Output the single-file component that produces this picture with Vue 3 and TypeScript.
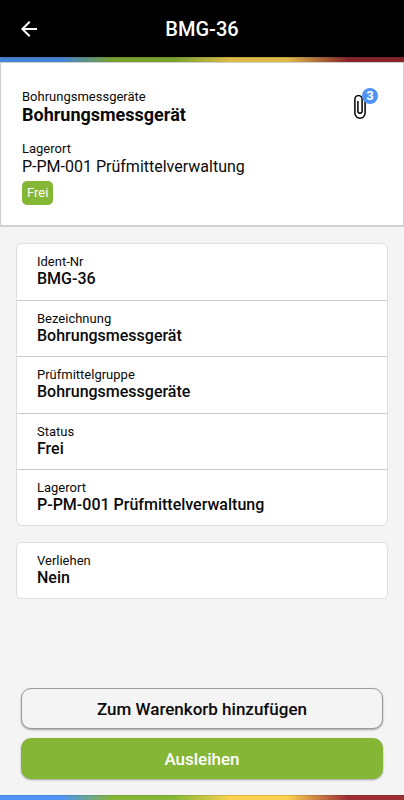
<script setup lang="ts">
interface Field {
  label: string
  value: string
}

const groups: Field[][] = [
  [
    { label: 'Ident-Nr', value: 'BMG-36' },
    { label: 'Bezeichnung', value: 'Bohrungsmessgerät' },
    { label: 'Prüfmittelgruppe', value: 'Bohrungsmessgeräte' },
    { label: 'Status', value: 'Frei' },
    { label: 'Lagerort', value: 'P-PM-001 Prüfmittelverwaltung' },
  ],
  [{ label: 'Verliehen', value: 'Nein' }],
]

const attachmentCount: number = 3
</script>

<template>
  <div class="screen">
    <header class="app-bar">
      <button class="back" type="button" aria-label="Zurück">
        <svg viewBox="0 0 24 24" width="24" height="24" aria-hidden="true">
          <path fill="currentColor" d="M20 11H7.83l5.59-5.59L12 4l-8 8 8 8 1.41-1.41L7.83 13H20v-2z" />
        </svg>
      </button>
      <h1 class="title">BMG-36</h1>
    </header>
    <div class="stripe stripe-top"></div>

    <section class="summary">
      <div class="summary-text">
        <p class="label">Bohrungsmessgeräte</p>
        <h2 class="name">Bohrungsmessgerät</h2>
        <p class="label">Lagerort</p>
        <p class="place">P-PM-001 Prüfmittelverwaltung</p>
        <span class="status">Frei</span>
      </div>
      <button class="attachments" type="button" aria-label="Anhänge">
        <svg viewBox="0 0 12 24" width="12" height="24" aria-hidden="true">
          <path
            fill="none"
            stroke="currentColor"
            stroke-width="1.5"
            stroke-linecap="round"
            d="M3.9 6.5v9.6a2.1 2.1 0 0 0 4.2 0V4.2a3.6 3.6 0 0 0-7.2 0v13.9a5.1 5.1 0 0 0 10.2 0V6.5"
          />
        </svg>
        <span class="badge">{{ attachmentCount }}</span>
      </button>
    </section>

    <main class="details">
      <dl v-for="(group, index) in groups" :key="index" class="card" :class="{ 'card-main': group.length > 1 }">
        <div v-for="field in group" :key="field.label" class="row">
          <dt class="label">{{ field.label }}</dt>
          <dd class="value">{{ field.value }}</dd>
        </div>
      </dl>
    </main>

    <footer class="actions">
      <button class="action outlined" type="button">Zum Warenkorb hinzufügen</button>
      <button class="action filled" type="button">Ausleihen</button>
    </footer>
    <div class="stripe"></div>
  </div>
</template>

<style>
body {
  margin: 0;
  background: #f4f4f4;
}
</style>

<style scoped>
.screen {
  display: flex;
  flex-direction: column;
  min-height: 100vh;
  font-family: Roboto, "Liberation Sans", sans-serif;
  color: #0a0a0a;
  background: #f4f4f4;
}

h1,
h2,
p,
dl,
dd {
  margin: 0;
}

button {
  font-family: inherit;
  cursor: pointer;
}

.app-bar {
  display: grid;
  grid-template-columns: 58px 1fr 58px;
  align-items: center;
  height: 57px;
  color: #fff;
  background: #000;
}

.back {
  display: flex;
  justify-content: center;
  padding: 0;
  border: 0;
  color: inherit;
  background: none;
}

.title {
  font-size: 20px;
  line-height: 24px;
  font-weight: 500;
  text-align: center;
}

.stripe {
  height: 5px;
  background: linear-gradient(90deg, #4d94f5 15%, #86b636 28%, #86b636 43%, #fad250 57%, #fad250 71%, #9c2f36 86%);
  box-shadow: inset 0 1px #0000001a;
}

.stripe-top {
  background: linear-gradient(90deg, #4583d9 15%, #78a12d 28%, #78a12d 43%, #dcba48 57%, #dcba48 71%, #85242a 86%);
}

.summary {
  display: flex;
  justify-content: space-between;
  align-items: flex-start;
  padding: 26px 25px 20px 21px;
  border: 1px solid #d0d0d0;
  border-bottom-width: 2px;
  background: #fff;
}

.label {
  font-size: 13px;
  line-height: 16px;
}

.name {
  margin-bottom: 16px;
  font-size: 18px;
  line-height: 20px;
  font-weight: 700;
}

.place {
  font-size: 16px;
  line-height: 19px;
}

.status {
  display: inline-block;
  margin-top: 5px;
  padding: 4px 5px;
  border-radius: 5px;
  font-size: 13px;
  line-height: 16px;
  color: #fff;
  background: #86b636;
}

.attachments {
  position: relative;
  display: flex;
  padding: 6px 12px 0 0;
  border: 0;
  color: #000;
  background: none;
}

.badge {
  position: absolute;
  top: -1px;
  right: 0;
  width: 16px;
  border-radius: 8px;
  font-size: 13px;
  line-height: 16px;
  font-weight: 700;
  text-align: center;
  color: #fff;
  background: #4d94f5;
}

.details {
  display: flex;
  flex: 1;
  flex-direction: column;
  gap: 16px;
  padding: 16px 16px 24px;
}

.card {
  display: grid;
  grid-auto-rows: 1fr;
  box-sizing: border-box;
  border: 1px solid #dedede;
  border-radius: 6px;
  background: #fff;
}

.card-main {
  min-height: 283px;
}

.row {
  padding: 10px 20px 11px;
}

.row + .row {
  border-top: 1px solid #ccc;
}

.value {
  font-size: 16px;
  line-height: 18px;
  font-weight: 500;
}

.actions {
  display: flex;
  flex-direction: column;
  gap: 9px;
  padding: 0 21px 16px;
}

.action {
  height: 41px;
  border-radius: 10px;
  font-size: 17px;
  line-height: 20px;
  font-weight: 500;
  box-shadow: 0 1px 2px #00000059;
}

.outlined {
  border: 1px solid #999;
  color: #0a0a0a;
  background: #f4f4f4;
}

.filled {
  border: 0;
  color: #fff;
  background: #86b636;
}
</style>
